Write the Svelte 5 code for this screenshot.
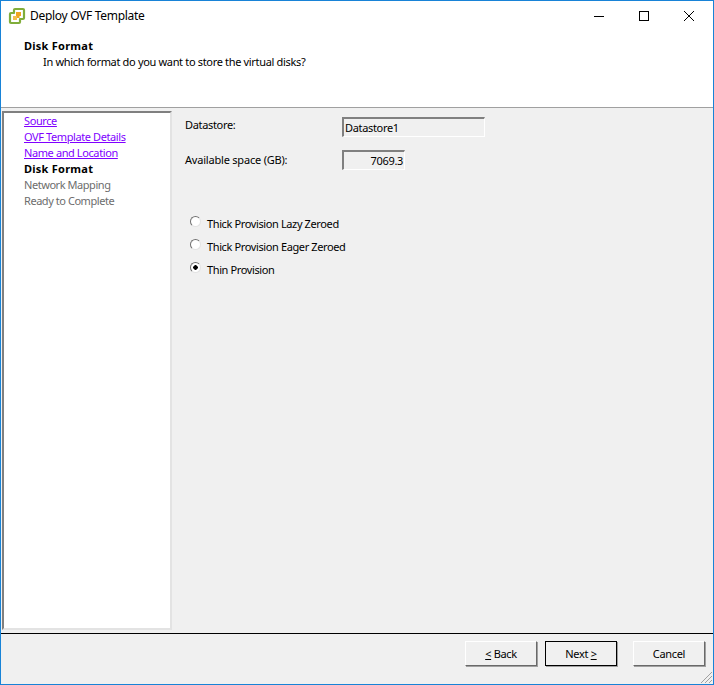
<script lang="ts">
	const steps = [
		{ label: 'Source', state: 'done' },
		{ label: 'OVF Template Details', state: 'done' },
		{ label: 'Name and Location', state: 'done' },
		{ label: 'Disk Format', state: 'current' },
		{ label: 'Network Mapping', state: 'todo' },
		{ label: 'Ready to Complete', state: 'todo' },
	]

	const formats = ['Thick Provision Lazy Zeroed', 'Thick Provision Eager Zeroed', 'Thin Provision']
	let selected = $state('Thin Provision')
</script>

<div class="window">
	<header class="titlebar">
		<svg class="app-icon" width="18" height="18" viewBox="0 0 18 18">
			<path d="M7 2h8a1 1 0 0 1 1 1v8a1 1 0 0 1-1 1h-3v3a1 1 0 0 1-1 1H3a1 1 0 0 1-1-1V7a1 1 0 0 1 1-1h3V3a1 1 0 0 1 1-1z" fill="#fff" stroke="#80ad3a" stroke-width="2.2" stroke-linejoin="round" />
			<path d="M8 5h5v4h-1.5v2H5V9h3z" fill="#f0a520" />
			<path d="M5 9h4v4H5z" fill="#f3c04e" />
		</svg>
		<span class="title">Deploy OVF Template</span>
		<div class="controls">
			<svg width="12" height="12" viewBox="0 0 12 12"><path d="M1 6.5h10" stroke="#000" /></svg>
			<svg width="12" height="12" viewBox="0 0 12 12"><rect x="1.5" y="1.5" width="9" height="9" fill="none" stroke="#000" /></svg>
			<svg width="12" height="12" viewBox="0 0 12 12"><path d="M1 1l10 10M11 1L1 11" stroke="#000" /></svg>
		</div>
	</header>

	<section class="intro">
		<h1>Disk Format</h1>
		<p>In which format do you want to store the virtual disks?</p>
	</section>

	<main class="body">
		<nav class="steps">
			{#each steps as step}
				{#if step.state === 'done'}
					<a href="#top">{step.label}</a>
				{:else}
					<span class={step.state}>{step.label}</span>
				{/if}
			{/each}
		</nav>

		<form class="content">
			<div class="fields">
				<span class="label">Datastore:</span>
				<div class="readonly wide">Datastore1</div>
				<span class="label">Available space (GB):</span>
				<div class="readonly narrow">7069.3</div>
			</div>
			<div class="radios">
				{#each formats as format}
					<label>
						<input type="radio" name="format" value={format} bind:group={selected} />
						<span class="dot"></span>
						{format}
					</label>
				{/each}
			</div>
		</form>
	</main>

	<footer class="footer">
		<button type="button"><u>&lt;</u> Back</button>
		<button type="button" class="default">Next <u>&gt;</u></button>
		<button type="button" class="cancel">Cancel</button>
		<svg class="grip" width="14" height="14" viewBox="0 0 14 14">
			<path d="M13 2L2 13M13 6L6 13M13 10l-3 3" stroke="#a0a0a0" fill="none" />
		</svg>
	</footer>
</div>

<style>
	:global(body) {
		margin: 0;
		background: #f0f0f0;
	}

	.window {
		display: flex;
		position: relative;
		flex-direction: column;
		box-sizing: border-box;
		border: 1px solid #1883d7;
		background: #f0f0f0;
		width: 714px;
		height: 685px;
		color: #000;
		font-size: 11px;
		font-family: 'Noto Sans', Tahoma, sans-serif;
		letter-spacing: -0.33px;
	}

	.titlebar {
		display: flex;
		align-items: center;
		background: #fff;
		padding-left: 7px;
		height: 30px;
	}

	.app-icon {
		margin-right: 4px;
	}

	.title {
		margin-top: -1px;
		font-size: 12px;
		letter-spacing: -0.3px;
	}

	.controls {
		display: flex;
		gap: 33px;
		margin-top: -1px;
		margin-right: 18px;
		margin-left: auto;
	}

	.intro {
		box-sizing: border-box;
		border-bottom: 1px solid #a0a0a0;
		background: #fff;
		padding: 7px 0 0 23px;
		height: 77px;
	}

	h1 {
		margin: 0;
		font-weight: 700;
		font-size: 11px;
		line-height: 16px;
		letter-spacing: 0.25px;
	}

	.intro p {
		margin: 0;
		padding-left: 19px;
		line-height: 16px;
	}

	.body {
		display: flex;
		flex: 1;
		align-items: flex-start;
		border-bottom: 1px solid #000;
		padding: 3px 0 3px 1px;
		min-height: 0;
	}

	.steps {
		display: flex;
		flex-direction: column;
		box-sizing: border-box;
		border-top: 2px solid #808080;
		border-right: 2px solid #e3e3e3;
		border-bottom: 2px solid #e3e3e3;
		border-left: 2px solid #808080;
		background: #fff;
		padding: 0 0 0 20px;
		width: 170px;
		height: 100%;
		line-height: 16px;
	}

	.steps a {
		align-self: flex-start;
		color: #8000ff;
		letter-spacing: -0.4px;
	}

	.current {
		font-weight: 700;
		letter-spacing: 0.25px;
	}

	.todo {
		color: #6d6d6d;
		letter-spacing: -0.45px;
	}

	.content {
		flex: 1;
		padding: 6px 0 0 13px;
	}

	.fields {
		display: grid;
		grid-template-columns: 157px 1fr;
		row-gap: 13px;
		align-items: start;
	}

	.label {
		line-height: 16px;
	}

	.label:nth-of-type(2) {
		margin-top: 2px;
		letter-spacing: -0.2px;
	}

	.readonly {
		box-sizing: border-box;
		border-top: 2px solid #808080;
		border-right: 1px solid #fff;
		border-bottom: 1px solid #fff;
		border-left: 2px solid #808080;
		padding: 0 1px;
		height: 20px;
		line-height: 17px;
	}

	.wide {
		width: 143px;
	}

	.narrow {
		width: 63px;
		text-align: right;
	}

	.radios {
		display: flex;
		flex-direction: column;
		gap: 7px;
		margin-top: 46px;
		padding-left: 5px;
		letter-spacing: -0.38px;
	}

	label {
		display: flex;
		align-items: center;
		gap: 6px;
		height: 16px;
		line-height: 16px;
	}

	input {
		display: none;
	}

	.dot {
		display: block;
		box-sizing: border-box;
		margin-top: -5px;
		border: 1px solid;
		border-color: #707070 #e3e3e3 #e3e3e3 #707070;
		border-radius: 50%;
		background: #fff;
		width: 11px;
		height: 11px;
	}

	input:checked + .dot {
		background: radial-gradient(circle, #000 0 2px, #fff 2.5px);
	}

	.footer {
		display: flex;
		position: relative;
		justify-content: flex-end;
		align-items: flex-start;
		box-sizing: border-box;
		padding: 7px 8px 0 0;
		height: 50px;
	}

	button {
		box-sizing: border-box;
		margin-left: 8px;
		border: 1px solid;
		border-color: #fff #696969 #696969 #fff;
		box-shadow: 1px 1px 0 #a0a0a0;
		background: #f0f0f0;
		padding: 0;
		width: 72px;
		height: 25px;
		color: #000;
		font-size: 11px;
		font-family: inherit;
		letter-spacing: inherit;
	}

	.default {
		outline: 1px solid #000;
		outline-offset: -1px;
	}

	.cancel {
		margin-left: 16px;
	}

	.grip {
		position: absolute;
		right: 0;
		bottom: 0;
	}
</style>
